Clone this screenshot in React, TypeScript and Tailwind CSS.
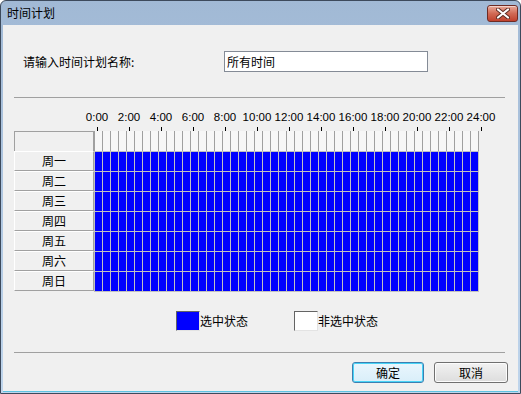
const days = ["周一", "周二", "周三", "周四", "周五", "周六", "周日"];
const hours = [0, 2, 4, 6, 8, 10, 12, 14, 16, 18, 20, 22, 24];
const cells = Array.from({ length: 48 }, (_, i) => i);

const cjk = { fontFamily: '"Noto Sans CJK SC", "Noto Sans", sans-serif' };

const CloseButton = () => (
    <button className="w-[31px] h-[17px] rounded-[3px] border border-[#6e2b24] bg-gradient-to-b from-[#e8a898] via-[#d16a55] to-[#c0402c] flex items-center justify-center shadow-[inset_0_1px_0_rgba(255,255,255,0.5)]">
        <svg width="14" height="11" viewBox="0 0 14 11">
            <path d="M2 1.5 L12 9.5 M12 1.5 L2 9.5" stroke="#5a2a22" strokeWidth="4" strokeLinecap="round" />
            <path d="M2 1.5 L12 9.5 M12 1.5 L2 9.5" stroke="#ffffff" strokeWidth="2.2" strokeLinecap="round" />
        </svg>
    </button>
);

export default function App() {
    return (
        <div
            className="w-[521px] h-[394px] border border-[#3d4a5c] rounded-t-[6px] bg-gradient-to-b from-[#a1b9d5] to-[#bfd5ec] px-[2px] pb-[1px] flex flex-col text-black text-[12px]"
            style={cjk}
        >
            {/* Title bar */}
            <div className="h-[24px] flex items-start justify-between">
                <span className="ml-[4px] mt-[4px] leading-[16px] text-[12px]">时间计划</span>
                <div className="mt-[4px]">
                    <CloseButton />
                </div>
            </div>

            {/* Body */}
            <div className="flex-1 bg-[#f0f0f0] flex flex-col border-b border-[#5ec3e2]">
                {/* Name row */}
                <div className="mt-[26px] h-[21px] flex items-center">
                    <span className="ml-[20px] w-[201px] leading-[16px]">请输入时间计划名称:</span>
                    <div className="w-[204px] h-[21px] border border-[#848b96] bg-white flex items-center pl-[2px] leading-[16px]">
                        所有时间
                    </div>
                </div>

                <div className="mt-[25px] ml-[11px] w-[491px] h-px bg-[#a0a0a0]" />

                {/* Schedule grid */}
                <div className="mt-[12px] ml-[11px] flex flex-col">
                    <div className="h-[17px] flex" style={{ fontFamily: '"Liberation Sans", Arial, sans-serif' }}>
                        <div className="w-[67px]" />
                        {hours.map((h) => (
                            <div key={h} className="w-[32px] text-center leading-[14px] text-[11.5px]">
                                {h}:00
                            </div>
                        ))}
                    </div>
                    <div className="h-[4px] flex">
                        <div className="w-[83px]" />
                        {hours.map((h) => (
                            <div key={h} className="w-[32px] border-l border-black" />
                        ))}
                    </div>
                    <div className="h-[20px] flex">
                        <div className="w-[80px] border-t border-l border-r border-[#a0a0a0]" />
                        <div className="flex border-r border-[#a0a0a0]">
                            {cells.map((c) => (
                                <div key={c} className="w-[8px] h-[20px] border-l border-[#a0a0a0] bg-[#f7f7f7]" />
                            ))}
                        </div>
                    </div>
                    <div className="flex flex-col">
                        {days.map((d) => (
                            <div key={d} className="h-[20px] flex">
                                <div className="w-[80px] border-t border-l border-white border-b border-r border-b-[#a0a0a0] border-r-[#a0a0a0] flex items-center justify-center leading-[16px]">
                                    {d}
                                </div>
                                <div className="flex border-r border-[#c0c0c0]">
                                    {cells.map((c) => (
                                        <div key={c} className="w-[8px] h-[20px] border-l border-t border-[#c0c0c0] bg-[#0000ff]" />
                                    ))}
                                </div>
                            </div>
                        ))}
                        <div className="ml-[80px] w-[385px] h-px bg-[#c0c0c0]" />
                    </div>
                </div>

                {/* Legend */}
                <div className="mt-[19px] ml-[173px] h-[20px] flex items-center">
                    <div className="w-[24px] h-[20px] bg-[#0000ff] border-t border-l border-[#646464] border-r border-b border-r-[#e3e3e3] border-b-[#e3e3e3]" />
                    <span className="w-[94px] leading-[16px]">选中状态</span>
                    <div className="w-[24px] h-[20px] bg-white border-t border-l border-[#646464] border-r border-b border-r-[#e3e3e3] border-b-[#e3e3e3]" />
                    <span className="leading-[16px]">非选中状态</span>
                </div>

                <div className="mt-[21px] ml-[11px] w-[491px] h-px bg-[#a0a0a0]" />

                {/* Buttons */}
                <div className="mt-[9px] flex justify-end gap-[10px] mr-[10px]">
                    <button className="w-[72px] h-[21px] rounded-[3px] border border-[#3c7fb1] bg-gradient-to-b from-[#eaf6fd] to-[#d9eef9] shadow-[inset_0_0_0_1px_#48d4f7] leading-[16px]">
                        确定
                    </button>
                    <button className="w-[74px] h-[21px] rounded-[3px] border border-[#707070] bg-gradient-to-b from-[#f2f2f2] to-[#dddddd] shadow-[inset_0_0_0_1px_#fcfcfc] leading-[16px]">
                        取消
                    </button>
                </div>
            </div>
        </div>
    );
}
